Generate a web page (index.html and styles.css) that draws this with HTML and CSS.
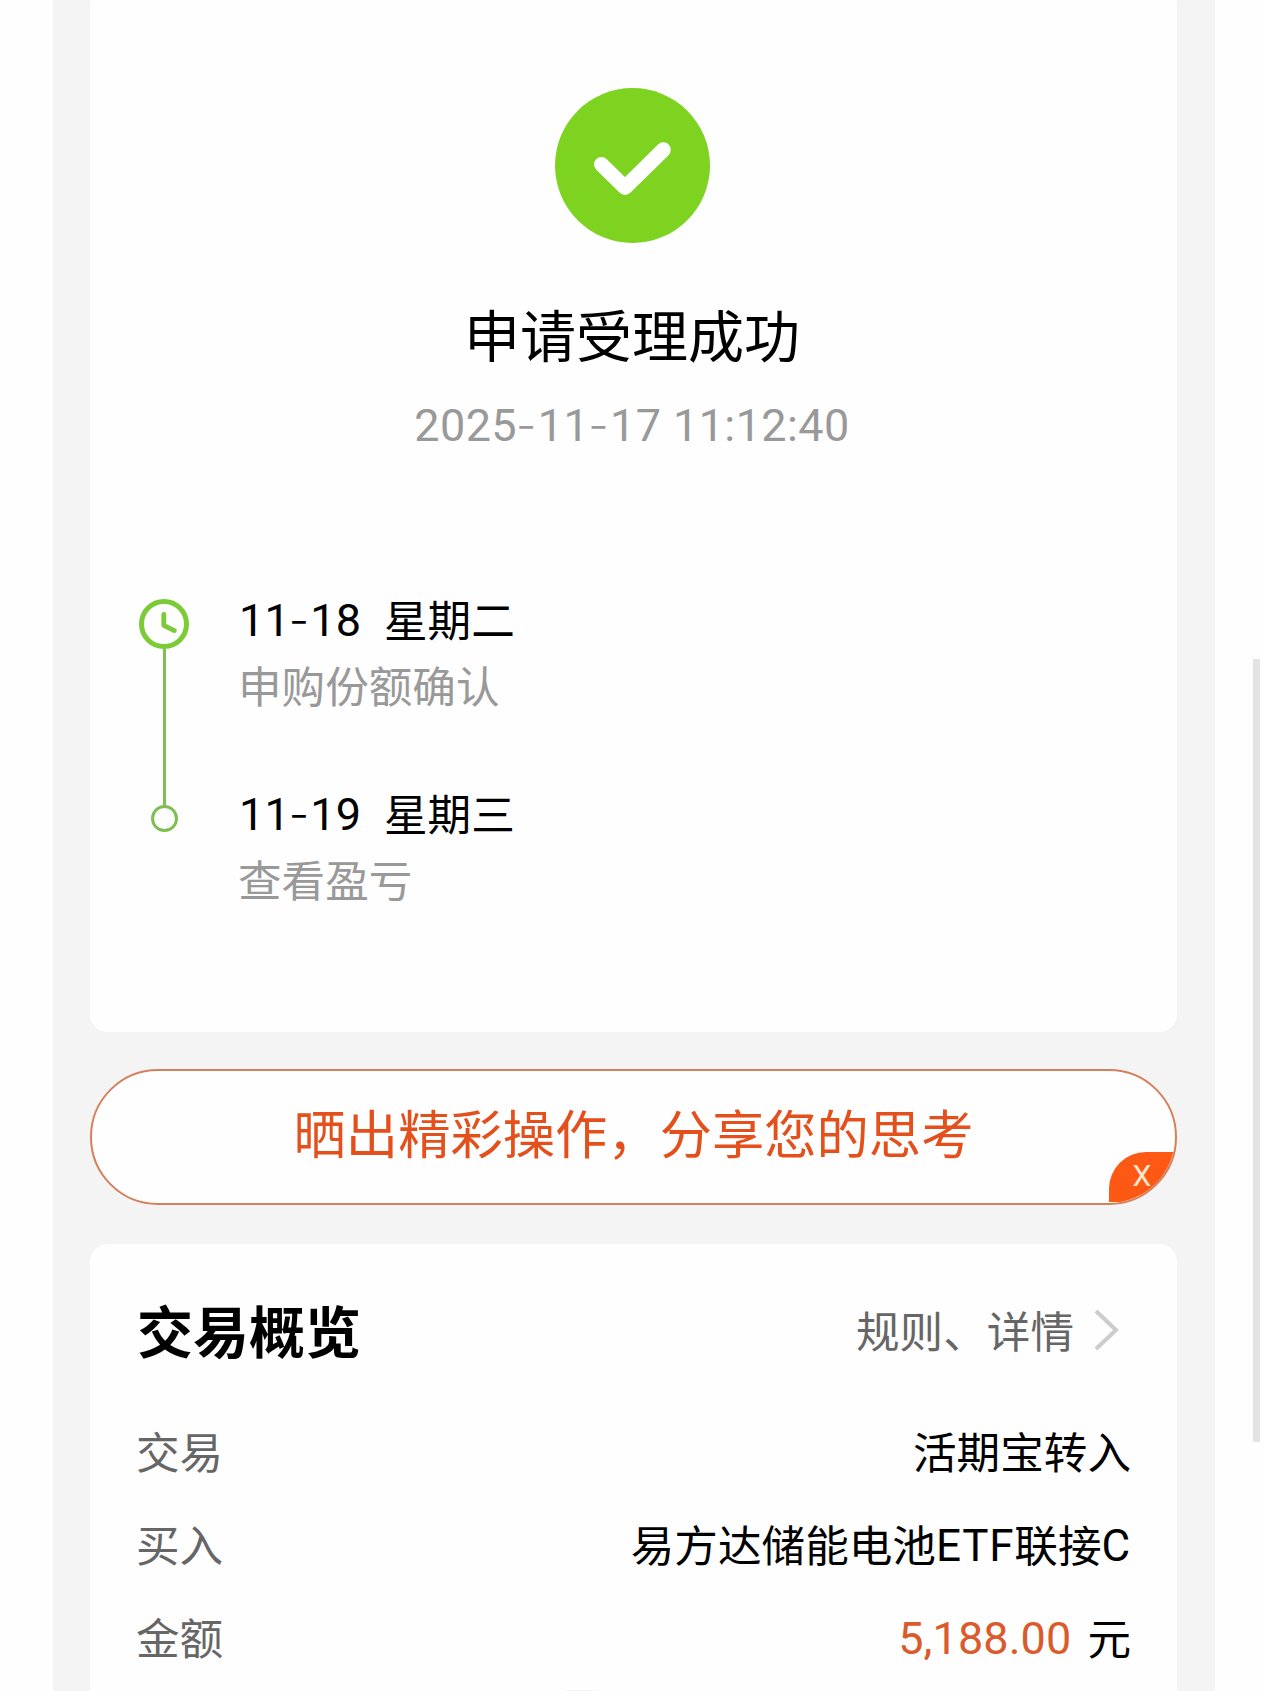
FILE: index.html
```html
<!DOCTYPE html>
<html lang="zh-CN">
<head>
  <meta charset="UTF-8">
  <meta name="viewport" content="width=device-width, initial-scale=1.0">
  <title>申请受理成功</title>
  <link rel="stylesheet" href="styles.css">
</head>
<body>
  <div class="page">
    <div class="card result">
      <svg class="result-icon" viewBox="0 0 155 155">
        <circle cx="77.5" cy="77.5" r="77.5" fill="#7ed321"/>
        <path d="M46.5 76.5 L70 99.5 L108.3 61.8" fill="none" stroke="#fff" stroke-width="15" stroke-linecap="round" stroke-linejoin="round"/>
      </svg>
      <h1 class="result-title">申请受理成功</h1>
      <div class="result-time">2025<span class="dash">-</span>11<span class="dash">-</span>17 11:12:40</div>

      <div class="timeline">
        <div class="step">
          <div class="marker">
            <svg class="clock" viewBox="0 0 50 50" fill="none" stroke="#7acb35">
              <circle cx="25" cy="25" r="22.5" stroke-width="5"/>
              <path d="M24.8 15.5 V26.3 L35.3 31.6" stroke-width="4.8" stroke-linecap="round" stroke-linejoin="round"/>
            </svg>
            <div class="line"></div>
          </div>
          <div class="step-text">
            <div class="step-date"><span class="num">11<span class="dash">-</span>18</span><span class="week">星期二</span></div>
            <div class="step-desc">申购份额确认</div>
          </div>
        </div>
        <div class="step">
          <div class="marker">
            <div class="dot"></div>
          </div>
          <div class="step-text">
            <div class="step-date"><span class="num">11<span class="dash">-</span>19</span><span class="week">星期三</span></div>
            <div class="step-desc">查看盈亏</div>
          </div>
        </div>
      </div>
    </div>

    <div class="share">
      晒出精彩操作，分享您的思考
      <span class="share-close">X</span>
    </div>

    <div class="card overview">
      <div class="overview-head">
        <h2>交易概览</h2>
        <div class="more">
          规则、详情
          <svg class="arrow" viewBox="0 0 26 42">
            <path d="M2 2 L22 21 L2 40" fill="none" stroke="#ccc" stroke-width="4"/>
          </svg>
        </div>
      </div>
      <div class="row">
        <span class="label">交易</span>
        <span>活期宝转入</span>
      </div>
      <div class="row">
        <span class="label">买入</span>
        <span>易方达储能电池<span class="latin">ETF</span>联接<span class="latin">C</span></span>
      </div>
      <div class="row">
        <span class="label">金额</span>
        <span><span class="num amount">5,188.00</span>元</span>
      </div>
      <div class="handle"></div>
    </div>
  </div>
  <div class="scrollbar"></div>
</body>
</html>
```
FILE: styles.css
```css
body {
  margin: 0;
  height: 1691px;
  overflow: hidden;
  background: #fefefe;
  font-family: "Noto Sans CJK SC", sans-serif;
  color: #000;
}
.page {
  box-sizing: border-box;
  width: 1162px;
  height: 1691px;
  margin-left: 53px;
  padding: 0 38px 0 37px;
  background: #f4f4f4;
  overflow: hidden;
}
.card {
  background: #fefefe;
  border-radius: 18px;
}
.result {
  box-sizing: border-box;
  height: 1046px;
  margin-top: -14px;
  padding: 102px 3px 0 0;
  text-align: center;
}
.result-icon {
  display: block;
  width: 155px;
  height: 155px;
  margin: 0 auto;
}
.result-title {
  margin: 58px 0 0;
  font-size: 56px;
  line-height: 64px;
  font-weight: 400;
}
.result-time {
  margin-top: 35px;
  font-family: Roboto, sans-serif;
  font-size: 45px;
  line-height: 52px;
  letter-spacing: 0.4px;
  color: #999;
}
.dash {
  font-family: Inter, sans-serif;
  font-weight: 300;
  line-height: 1;
  margin: 0 1px 0 -1px;
}
.num {
  position: relative;
  top: -1px;
  font-family: Roboto, sans-serif;
  font-size: 45px;
  line-height: 1;
  letter-spacing: 0.1px;
}
.timeline {
  margin-top: 133px;
  padding-left: 48px;
  text-align: left;
}
.step {
  display: flex;
  height: 193.5px;
}
.marker {
  display: flex;
  flex-direction: column;
  align-items: center;
  width: 51px;
  margin-right: 50px;
  padding-top: 14px;
}
.clock {
  flex: none;
  width: 50px;
  height: 50px;
}
.line {
  flex: none;
  width: 3px;
  height: 156px;
  margin-left: 1px;
  background: #7fbf52;
}
.dot {
  box-sizing: border-box;
  width: 27px;
  height: 27px;
  margin: 12.5px 0 0 2px;
  border: 3.5px solid #7fbf52;
  border-radius: 50%;
}
.step-date,
.step-desc {
  height: 66px;
  font-size: 43.6px;
  line-height: 66px;
  white-space: nowrap;
}
.step-desc {
  margin-left: -1px;
  color: #999;
}
.week {
  margin-left: 23px;
}
.share {
  position: relative;
  box-sizing: border-box;
  height: 136px;
  margin-top: 37px;
  border: 2px solid #d4805c;
  border-radius: 68px;
  background: #fefefe;
  color: #e4501c;
  font-size: 52.3px;
  line-height: 121px;
  text-align: center;
  overflow: hidden;
}
.share-close {
  position: absolute;
  right: 0;
  bottom: 1px;
  width: 66px;
  height: 50px;
  border-top-left-radius: 37px;
  background: #fd5914;
  color: #ffe6d2;
  font-family: Roboto, sans-serif;
  font-size: 30px;
  line-height: 48px;
}
.overview {
  height: 500px;
  margin-top: 39px;
  padding: 41px 46px 0 47px;
}
.overview-head {
  display: flex;
  justify-content: space-between;
  align-items: center;
  height: 88px;
  margin-bottom: 33px;
}
.overview-head h2 {
  margin: 0;
  font-size: 56px;
  line-height: 88px;
  font-weight: 700;
}
.more {
  display: flex;
  align-items: center;
  font-size: 43.6px;
  line-height: 88px;
  color: #666;
}
.arrow {
  width: 26px;
  height: 42px;
  margin: 2px 11px 0 20px;
}
.row {
  display: flex;
  justify-content: space-between;
  height: 93px;
  font-size: 43.6px;
  line-height: 88px;
}
.label {
  margin-left: -1px;
  color: #666;
}
.latin {
  position: relative;
  top: -1px;
  font-family: Roboto, sans-serif;
  font-size: 44px;
  line-height: 1;
  letter-spacing: 0.8px;
}
.amount {
  margin-right: 16px;
  color: #db5a2b;
}
.handle {
  width: 33px;
  height: 8px;
  margin: 5px 0 0 429px;
  background: #f4f4f4;
}
.scrollbar {
  position: absolute;
  top: 659px;
  left: 1253px;
  width: 7px;
  height: 783px;
  background: #e3e3e3;
}
```
